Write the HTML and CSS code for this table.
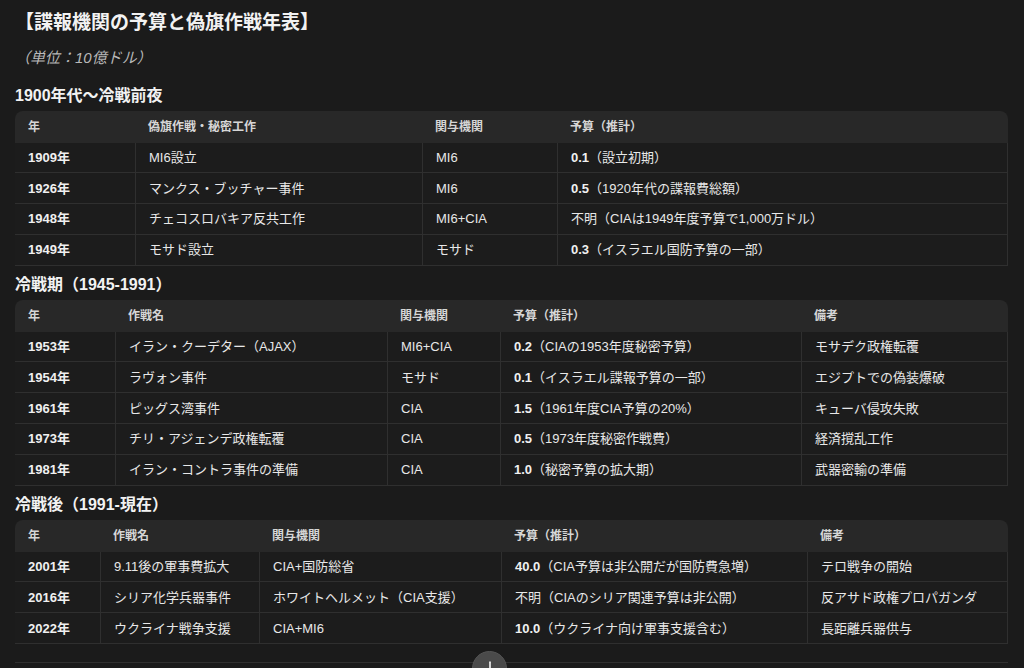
FILE: index.html
```html
<!DOCTYPE html>
<html lang="ja">
<head>
<meta charset="utf-8">
<title>諜報機関の予算と偽旗作戦年表</title>
<link rel="stylesheet" href="styles.css">
</head>
<body>
<main class="page">
  <h2 class="title">【諜報機関の予算と偽旗作戦年表】</h2>
  <p class="unit">（単位：10億ドル）</p>

  <h3 class="sec-h first">1900年代〜冷戦前夜</h3>
  <div class="tbl-wrap">
    <table class="tbl">
      <colgroup><col class="a1"><col class="a2"><col class="a3"><col class="a4"></colgroup>
      <thead><tr><th>年</th><th>偽旗作戦・秘密工作</th><th>関与機関</th><th>予算（推計）</th></tr></thead>
      <tbody>
        <tr><td class="yr">1909年</td><td>MI6設立</td><td>MI6</td><td><b>0.1</b>（設立初期）</td></tr>
        <tr><td class="yr">1926年</td><td>マンクス・ブッチャー事件</td><td>MI6</td><td><b>0.5</b>（1920年代の諜報費総額）</td></tr>
        <tr><td class="yr">1948年</td><td>チェコスロバキア反共工作</td><td>MI6+CIA</td><td>不明（CIAは1949年度予算で1,000万ドル）</td></tr>
        <tr><td class="yr">1949年</td><td>モサド設立</td><td>モサド</td><td><b>0.3</b>（イスラエル国防予算の一部）</td></tr>
      </tbody>
    </table>
  </div>

  <h3 class="sec-h">冷戦期（1945-1991）</h3>
  <div class="tbl-wrap">
    <table class="tbl">
      <colgroup><col class="b1"><col class="b2"><col class="b3"><col class="b4"><col class="b5"></colgroup>
      <thead><tr><th>年</th><th>作戦名</th><th>関与機関</th><th>予算（推計）</th><th>備考</th></tr></thead>
      <tbody>
        <tr><td class="yr">1953年</td><td>イラン・クーデター（AJAX）</td><td>MI6+CIA</td><td><b>0.2</b>（CIAの1953年度秘密予算）</td><td>モサデク政権転覆</td></tr>
        <tr><td class="yr">1954年</td><td>ラヴォン事件</td><td>モサド</td><td><b>0.1</b>（イスラエル諜報予算の一部）</td><td>エジプトでの偽装爆破</td></tr>
        <tr><td class="yr">1961年</td><td>ピッグス湾事件</td><td>CIA</td><td><b>1.5</b>（1961年度CIA予算の20%）</td><td>キューバ侵攻失敗</td></tr>
        <tr><td class="yr">1973年</td><td>チリ・アジェンデ政権転覆</td><td>CIA</td><td><b>0.5</b>（1973年度秘密作戦費）</td><td>経済撹乱工作</td></tr>
        <tr><td class="yr">1981年</td><td>イラン・コントラ事件の準備</td><td>CIA</td><td><b>1.0</b>（秘密予算の拡大期）</td><td>武器密輸の準備</td></tr>
      </tbody>
    </table>
  </div>

  <h3 class="sec-h">冷戦後（1991-現在）</h3>
  <div class="tbl-wrap">
    <table class="tbl">
      <colgroup><col class="c1"><col class="c2"><col class="c3"><col class="c4"><col class="c5"></colgroup>
      <thead><tr><th>年</th><th>作戦名</th><th>関与機関</th><th>予算（推計）</th><th>備考</th></tr></thead>
      <tbody>
        <tr><td class="yr">2001年</td><td>9.11後の軍事費拡大</td><td>CIA+国防総省</td><td><b>40.0</b>（CIA予算は非公開だが国防費急増）</td><td>テロ戦争の開始</td></tr>
        <tr><td class="yr">2016年</td><td>シリア化学兵器事件</td><td>ホワイトヘルメット（CIA支援）</td><td>不明（CIAのシリア関連予算は非公開）</td><td>反アサド政権プロパガンダ</td></tr>
        <tr><td class="yr">2022年</td><td>ウクライナ戦争支援</td><td>CIA+MI6</td><td><b>10.0</b>（ウクライナ向け軍事支援含む）</td><td>長距離兵器供与</td></tr>
      </tbody>
    </table>
  </div>

  <div class="divider"></div>
</main>

<button class="scroll-btn" type="button" aria-label="下にスクロール">
  <svg viewBox="0 0 20 20" width="18" height="18" fill="none" stroke="#f2f2f2" stroke-width="1.8" stroke-linecap="round" stroke-linejoin="round">
    <path d="M10 3.5v13"/>
    <path d="M4.5 11l5.5 5.5 5.5-5.5"/>
  </svg>
</button>
</body>
</html>
```

FILE: styles.css
```css
* { box-sizing: border-box; }

html, body {
  margin: 0;
  background: #1b1b1b;
}

body {
  color: #ececec;
  font-family: "Liberation Sans", "Noto Sans CJK JP", sans-serif;
  overflow: hidden;
}

.page {
  padding: 9px 16px 0 15px;
}

.title {
  margin: 0;
  font-size: 19px;
  line-height: 28px;
  height: 28px;
  font-weight: 700;
  color: #f2f2f2;
}

.unit {
  margin: 10px 0 0;
  font-size: 15px;
  line-height: 22px;
  height: 22px;
  font-style: italic;
  color: #b8b8b8;
}

.sec-h {
  margin: 7px 0 3px;
  font-size: 16px;
  line-height: 24px;
  height: 24px;
  font-weight: 700;
  color: #f2f2f2;
}

.sec-h.first {
  margin-top: 14.5px;
}

.tbl-wrap {
  border-radius: 8px 8px 0 0;
  overflow: hidden;
}

.tbl {
  width: 100%;
  table-layout: fixed;
  border-collapse: separate;
  border-spacing: 0;
}

.tbl th {
  height: 32px;
  background: #282828;
  text-align: left;
  vertical-align: middle;
  font-size: 12px;
  font-weight: 600;
  line-height: 18px;
  color: #d6d6d6;
  padding: 3px 13px;
  white-space: nowrap;
}

.tbl td {
  height: 30.8px;
  font-size: 13px;
  line-height: 19px;
  padding: 3px 13px;
  vertical-align: middle;
  color: #e8e8e8;
  border-bottom: 1px solid #2f2f2f;
  border-left: 1px solid #2f2f2f;
  white-space: nowrap;
  background: #1c1c1c;
}

.tbl td:first-child {
  border-left: none;
}

.tbl td:last-child {
  border-right: 1px solid #2f2f2f;
}

.tbl td.yr,
.tbl td b {
  font-weight: 700;
  color: #f0f0f0;
}

/* column widths: table 1 */
.a1 { width: 120px; }
.a2 { width: 287px; }
.a3 { width: 135px; }
.a4 { width: auto; }

/* table 2 */
.b1 { width: 100px; }
.b2 { width: 272px; }
.b3 { width: 113px; }
.b4 { width: 301px; }
.b5 { width: auto; }

/* table 3 */
.c1 { width: 85px; }
.c2 { width: 159px; }
.c3 { width: 242px; }
.c4 { width: 306px; }
.c5 { width: auto; }

.divider {
  margin-top: 18px;
  border-top: 1px solid #303030;
}

.scroll-btn {
  position: fixed;
  left: 472px;
  top: 651px;
  width: 35px;
  height: 35px;
  border-radius: 50%;
  border: 1px solid #555;
  background: #4a4a4a;
  display: flex;
  align-items: flex-start;
  justify-content: center;
  padding: 7px 0 0;
  cursor: pointer;
}
```
